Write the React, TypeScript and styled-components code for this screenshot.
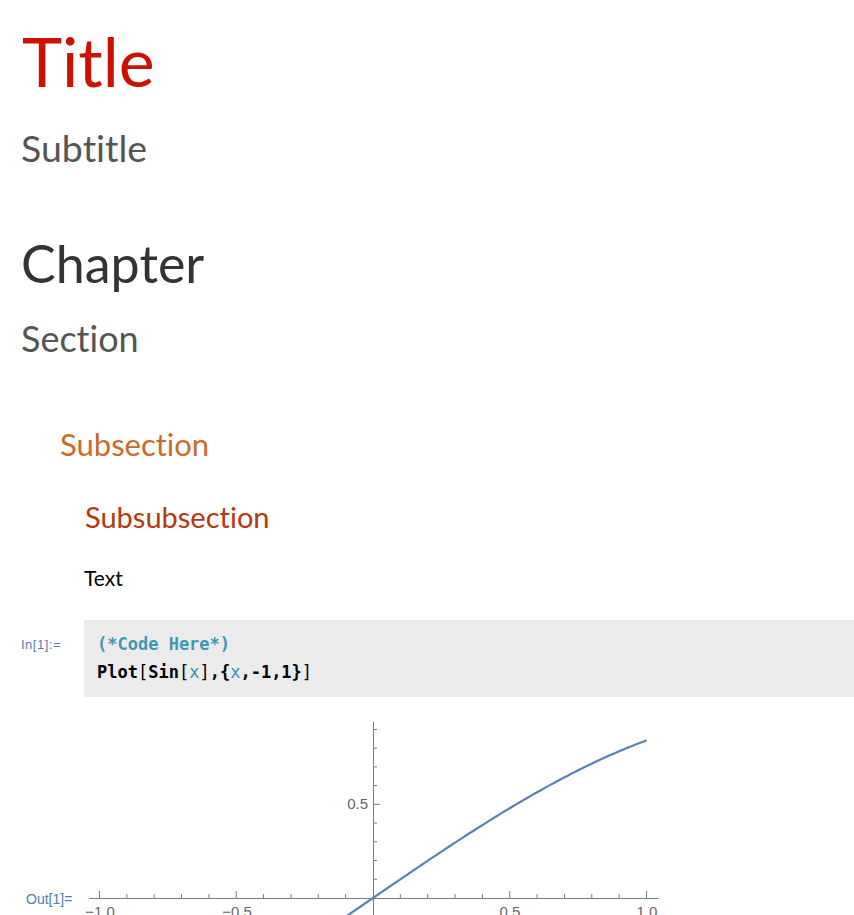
import React from "react";
import styled, { createGlobalStyle } from "styled-components";

const GlobalStyle = createGlobalStyle`
  html, body {
    margin: 0;
    padding: 0;
    background: #ffffff;
    overflow: hidden;
  }
  body {
    font-family: Lato, "Liberation Sans", sans-serif;
  }
`;

const Notebook = styled.main`
  display: flex;
  flex-direction: column;
  width: 854px;
  height: 915px;
  overflow: hidden;
`;

const Heading = styled.div<{ $size: number; $color: string; $indent: number; $top: number }>`
  margin: ${(p) => p.$top}px 0 0 ${(p) => p.$indent}px;
  font-family: Lato, "Noto Sans", sans-serif;
  font-size: ${(p) => p.$size}px;
  line-height: 1;
  font-weight: 400;
  font-variant-ligatures: none;
  color: ${(p) => p.$color};
  white-space: nowrap;
`;

const CellRow = styled.section<{ $top: number }>`
  display: grid;
  grid-template-columns: 84px 1fr;
  margin-top: ${(p) => p.$top}px;
`;

const CellLabel = styled.div<{ $left: number; $padTop: number; $size: number; $spacing: number }>`
  padding: ${(p) => p.$padTop}px 0 0 ${(p) => p.$left}px;
  font-family: "Liberation Sans", Arial, sans-serif;
  font-size: ${(p) => p.$size}px;
  letter-spacing: ${(p) => p.$spacing}px;
  line-height: 16px;
  color: #4f7fb0;
  white-space: nowrap;
`;

const CodeBox = styled.div`
  background: #ebebeb;
  padding: 10px 0 11px 13px;
  font-family: "DejaVu Sans Mono", "Liberation Mono", monospace;
  font-size: 17px;
  line-height: 28px;
  font-weight: 700;
  color: #000000;
`;

const CodeLine = styled.div`
  white-space: pre;
  height: 28px;
`;

const Comment = styled.span`
  color: #4297b7;
  font-weight: 700;
`;

const Bracket = styled.span`
  font-weight: 400;
`;

const Variable = styled.span`
  color: #3e8fb5;
  font-weight: 400;
`;

const PlotArea = styled.div`
  height: 215px;
`;

const PlotSvg = styled.svg`
  display: block;
`;

const AXIS = "#7a7a7a";
const X0 = 373;
const Y0 = 898;
const SX = 273.5;
const SY = 187.3;

function SinPlot() {
  const pts: string[] = [];
  for (let i = 0; i <= 200; i++) {
    const x = -1 + (2 * i) / 200;
    pts.push(`${(X0 + SX * x).toFixed(2)},${(Y0 - SY * Math.sin(x)).toFixed(2)}`);
  }
  const xTicks = [];
  for (let k = -10; k <= 10; k++) {
    if (k === 0) continue;
    const x = X0 + (SX * k) / 10;
    const major = k % 5 === 0;
    xTicks.push(<line key={`x${k}`} x1={x} x2={x} y1={Y0} y2={Y0 - (major ? 7 : 4)} stroke={AXIS} strokeWidth={1} />);
  }
  const yTicks = [];
  for (let k = -2; k <= 9; k++) {
    if (k === 0) continue;
    const y = Y0 - (SY * k) / 10;
    const major = k % 5 === 0;
    yTicks.push(<line key={`y${k}`} x1={X0} x2={X0 + (major ? 7 : 4)} y1={y} y2={y} stroke={AXIS} strokeWidth={1} />);
  }
  const labelStyle = { fontFamily: '"Liberation Sans", Arial, sans-serif', fontSize: 15, fill: "#666666" } as const;
  return (
    <PlotSvg width={586} height={215} viewBox="84 705 586 215">
      <line x1={89} x2={659} y1={Y0 + 0.5} y2={Y0 + 0.5} stroke={AXIS} strokeWidth={1} />
      <line x1={X0 + 0.5} x2={X0 + 0.5} y1={722} y2={930} stroke={AXIS} strokeWidth={1} />
      {xTicks}
      {yTicks}
      <text x={368} y={809} textAnchor="end" {...labelStyle}>0.5</text>
      <text x={100} y={917} textAnchor="middle" {...labelStyle}>−1.0</text>
      <text x={237} y={917} textAnchor="middle" {...labelStyle}>−0.5</text>
      <text x={510} y={917} textAnchor="middle" {...labelStyle}>0.5</text>
      <text x={647} y={917} textAnchor="middle" {...labelStyle}>1.0</text>
      <polyline points={pts.join(" ")} fill="none" stroke="#5e81b5" strokeWidth={2.2} strokeLinejoin="round" />
    </PlotSvg>
  );
}

export default function App() {
  return (
    <>
      <GlobalStyle />
      <Notebook>
        <Heading $size={68} $color="#cc1100" $indent={22} $top={26.7}>Title</Heading>
        <Heading $size={37.5} $color="#555555" $indent={21} $top={34}>Subtitle</Heading>
        <Heading $size={52} $color="#333333" $indent={21} $top={70.7}>Chapter</Heading>
        <Heading $size={36} $color="#555555" $indent={21} $top={31.2}>Section</Heading>
        <Heading $size={31} $color="#c96b2b" $indent={60} $top={73.4}>Subsection</Heading>
        <Heading $size={29} $color="#b5380f" $indent={85} $top={42}>Subsubsection</Heading>
        <Heading $size={21} $color="#000000" $indent={84} $top={36}>Text</Heading>
        <CellRow $top={31.6}>
          <CellLabel $left={21} $padTop={16.5} $size={13} $spacing={0.5}>In[1]:=</CellLabel>
          <CodeBox>
            <CodeLine>
              <Comment>(*Code Here*)</Comment>
            </CodeLine>
            <CodeLine>
              Plot<Bracket>[</Bracket>Sin<Bracket>[</Bracket><Variable>x</Variable><Bracket>]</Bracket>,{"{"}<Variable>x</Variable>,-1,1{"}"}<Bracket>]</Bracket>
            </CodeLine>
          </CodeBox>
        </CellRow>
        <CellRow $top={8}>
          <CellLabel $left={26} $padTop={186} $size={14} $spacing={0}>Out[1]=</CellLabel>
          <PlotArea>
            <SinPlot />
          </PlotArea>
        </CellRow>
      </Notebook>
    </>
  );
}
